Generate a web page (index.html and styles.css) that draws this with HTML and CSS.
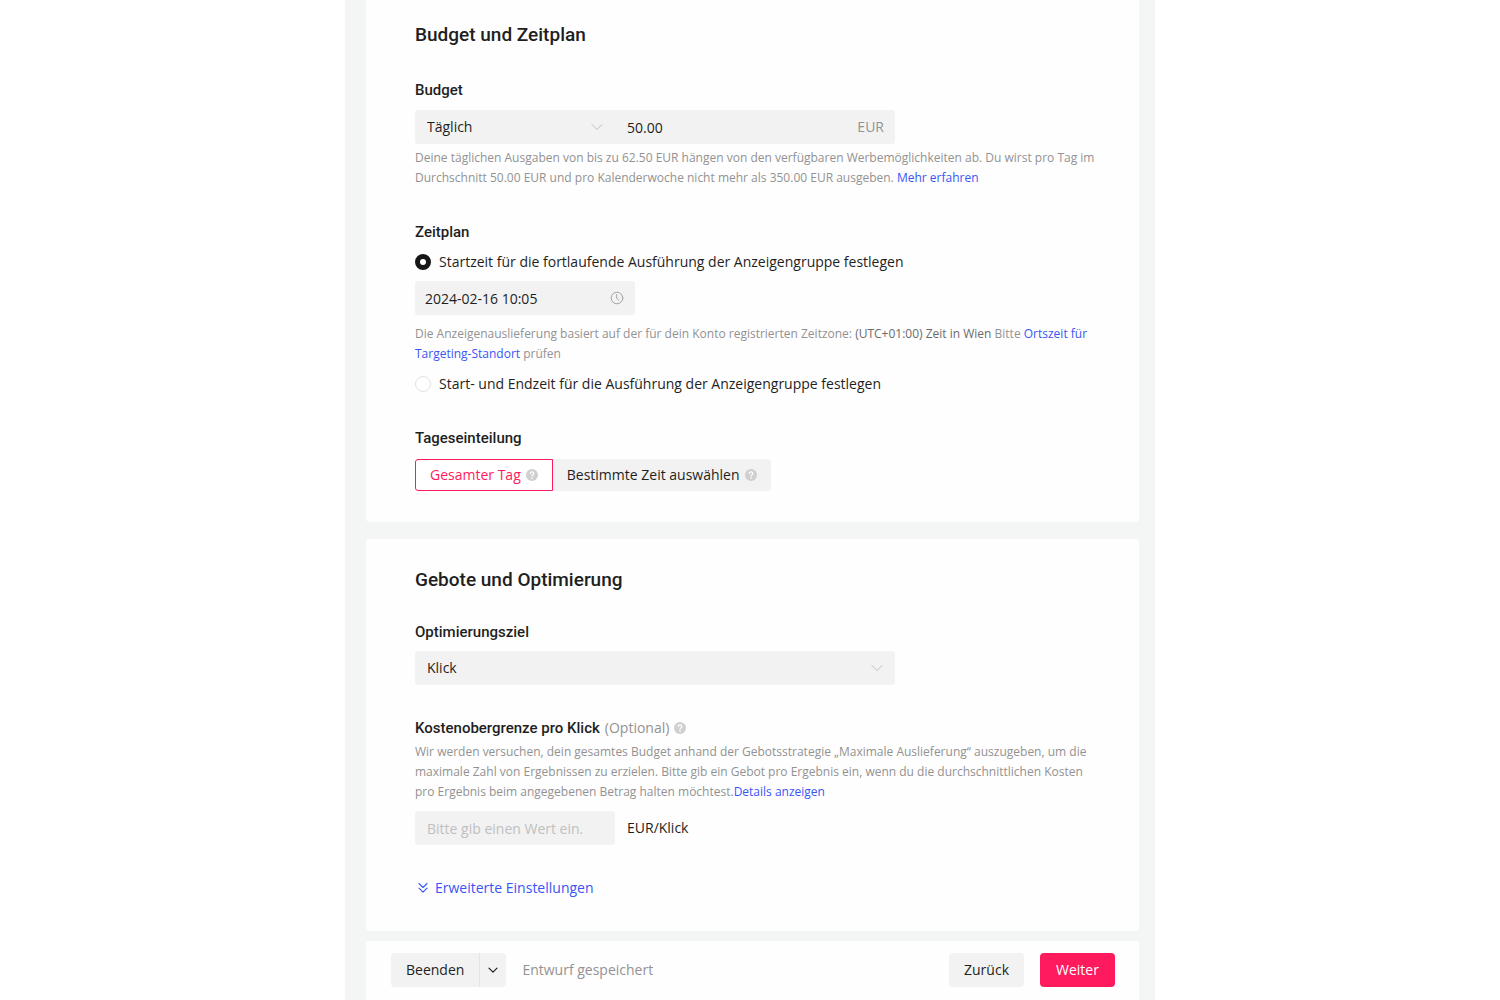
FILE: index.html
```
<!DOCTYPE html>
<html lang="de">
<head>
  <meta charset="UTF-8" />
  <meta name="viewport" content="width=device-width, initial-scale=1.0"/>
  <title>Anzeigengruppe – Budget und Gebote</title>
  <link rel="stylesheet" href="styles.css">
</head>
<body>
  <!-- Shared icons -->
  <svg class="sprite" aria-hidden="true">
    <symbol id="icon-help" viewBox="0 0 12 12">
      <circle cx="6" cy="6" r="6" fill="#cfcfcf"/>
      <path d="M4.3 4.6a1.7 1.7 0 1 1 2.6 1.4c-.6.4-.9.6-.9 1.1" fill="none" stroke="#fff" stroke-width="1.2" stroke-linecap="round"/>
      <circle cx="6" cy="9.1" r=".8" fill="#fff"/>
    </symbol>
    <symbol id="icon-chevron" viewBox="0 0 12 8">
      <path d="M1 1.5l5 5 5-5" fill="none" stroke="currentColor" stroke-linecap="round" stroke-linejoin="round"/>
    </symbol>
  </svg>

  <form class="page">
    <!-- Budget & schedule -->
    <section class="card card-budget">
      <h2>Budget und Zeitplan</h2>

      <div class="form-group">
        <label class="title" for="budgetType">Budget</label>
        <div class="field budget-row">
          <div class="select-wrap budget-type">
            <select id="budgetType">
              <option>Täglich</option>
              <option>Laufzeit</option>
            </select>
            <svg class="arrow"><use href="#icon-chevron"/></svg>
          </div>
          <input class="budget-amount" type="text" value="50.00" aria-label="Budgetbetrag">
          <span class="unit">EUR</span>
        </div>
        <p class="hint">Deine täglichen Ausgaben von bis zu 62.50 EUR hängen von den verfügbaren Werbemöglichkeiten ab. Du wirst pro Tag im Durchschnitt 50.00 EUR und pro Kalenderwoche nicht mehr als 350.00 EUR ausgeben. <a href="#">Mehr erfahren</a></p>
      </div>

      <div class="form-group">
        <h3 class="title">Zeitplan</h3>
        <label class="radio"><input type="radio" name="schedule" checked> Startzeit für die fortlaufende Ausführung der Anzeigengruppe festlegen</label>
        <div class="field date-field">
          <input type="text" value="2024-02-16 10:05" aria-label="Startzeit">
          <svg class="clock" viewBox="0 0 14 14" fill="none" stroke="#a6a6a6" stroke-linecap="round">
            <circle cx="7" cy="7" r="5.8"/>
            <path d="M6.6 3.6v3.6l2.2 1.9"/>
          </svg>
        </div>
        <p class="hint hint-zone">Die Anzeigenauslieferung basiert auf der für dein Konto registrierten Zeitzone: <span class="zone">(UTC+01:00) Zeit in Wien</span> Bitte <a href="#">Ortszeit für Targeting-Standort</a> prüfen</p>
        <label class="radio"><input type="radio" name="schedule"> Start- und Endzeit für die Ausführung der Anzeigengruppe festlegen</label>
      </div>

      <div class="form-group">
        <h3 class="title">Tageseinteilung</h3>
        <div class="segments">
          <button type="button" class="segment active">Gesamter Tag <svg class="help"><use href="#icon-help"/></svg></button>
          <button type="button" class="segment">Bestimmte Zeit auswählen <svg class="help"><use href="#icon-help"/></svg></button>
        </div>
      </div>
    </section>

    <!-- Bidding & optimization -->
    <section class="card card-bid">
      <h2>Gebote und Optimierung</h2>

      <div class="form-group">
        <label class="title" for="goal">Optimierungsziel</label>
        <div class="field select-wrap">
          <select id="goal">
            <option>Klick</option>
            <option>Conversion</option>
          </select>
          <svg class="arrow"><use href="#icon-chevron"/></svg>
        </div>
      </div>

      <div class="form-group">
        <div class="title-row">
          <label class="title" for="bid">Kostenobergrenze pro Klick</label>
          <span class="optional">(Optional)</span>
          <svg class="help"><use href="#icon-help"/></svg>
        </div>
        <p class="hint">Wir werden versuchen, dein gesamtes Budget anhand der Gebotsstrategie „Maximale Auslieferung“ auszugeben, um die maximale Zahl von Ergebnissen zu erzielen. Bitte gib ein Gebot pro Ergebnis ein, wenn du die durchschnittlichen Kosten pro Ergebnis beim angegebenen Betrag halten möchtest.<a href="#">Details anzeigen</a></p>
        <div class="bid-row">
          <div class="field bid-field">
            <input id="bid" type="text" placeholder="Bitte gib einen Wert ein.">
          </div>
          <span>EUR/Klick</span>
        </div>
      </div>

      <a class="advanced" href="#">
        <svg viewBox="0 0 12 12" fill="none" stroke="currentColor" stroke-width="1.1" stroke-linecap="round" stroke-linejoin="round">
          <path d="M2 1.5l4 4 4-4M2 6.2l4 4 4-4"/>
        </svg>
        Erweiterte Einstellungen
      </a>
    </section>

    <!-- Footer actions -->
    <footer class="footer">
      <div class="split">
        <button type="button" class="btn">Beenden</button>
        <button type="button" class="btn btn-more" aria-label="Weitere Optionen"><svg viewBox="0 0 10 7" fill="none" stroke="currentColor" stroke-width="1.2" stroke-linecap="round" stroke-linejoin="round"><path d="M1 1.2l4 4 4-4"/></svg></button>
      </div>
      <span class="saved">Entwurf gespeichert</span>
      <div class="nav">
        <button type="button" class="btn">Zurück</button>
        <button type="submit" class="btn btn-primary">Weiter</button>
      </div>
    </footer>
  </form>
</body>
</html>
```
FILE: styles.css
```
:root {
  --primary-color: #fe1a5c;
  --link-color: #3955f6;
  --text-color: #1f1f1f;
  --muted-color: #929292;
  --field-color: #f2f2f2;
  --bg-color: #f4f5f5;
}

* {
  box-sizing: border-box;
}

body {
  margin: 0;
  background: #fff;
  color: var(--text-color);
  font-family: "Open Sans", "Liberation Sans", sans-serif;
  font-size: 14px;
  line-height: 20px;
}

h2, h3, p {
  margin: 0;
}

a {
  color: var(--link-color);
  text-decoration: none;
}

input, select, button {
  font: inherit;
  color: inherit;
  margin: 0;
  padding: 0;
  border: none;
  border-radius: 0;
  background: transparent;
}

button {
  cursor: pointer;
}

svg {
  flex: none;
}

.sprite {
  display: none;
}

.page {
  max-width: 810px;
  min-height: 100vh;
  margin: 0 auto;
  padding: 0 16px 0 21px;
  background: var(--bg-color);
}

.card {
  padding: 28px 43px 32px 49px;
  background: #fefefe;
  border-radius: 4px;
}

.card-budget {
  margin-bottom: 17px;
  padding-top: 22px;
  padding-bottom: 31px;
  border-radius: 0 0 4px 4px;
}

.card-bid {
  margin-bottom: 10px;
}

h2 {
  font-family: Roboto, sans-serif;
  font-size: 19px;
  font-weight: 500;
  line-height: 26px;
  margin-bottom: 29px;
}

.card-budget h2 {
  margin-bottom: 32px;
}

.form-group {
  margin-bottom: 33px;
}

.card-budget .form-group {
  margin-bottom: 34px;
}

.card-budget .form-group:last-child {
  margin-bottom: 0;
}

.title {
  display: block;
  font-family: Roboto, sans-serif;
  font-size: 15px;
  font-weight: 500;
  line-height: 20px;
}

.field {
  display: flex;
  align-items: center;
  max-width: 480px;
  height: 34px;
  margin-top: 9px;
  background: var(--field-color);
  border-radius: 3px;
}

.budget-row {
  margin-top: 10px;
}

.field input {
  flex: 1;
  min-width: 0;
  height: 100%;
  padding: 0 12px;
}

.field input::placeholder {
  color: #c0c0c0;
}

.select-wrap {
  position: relative;
}

.select-wrap select {
  width: 100%;
  height: 100%;
  padding: 0 32px 0 12px;
  appearance: none;
}

.arrow {
  position: absolute;
  right: 12px;
  width: 12px;
  height: 8px;
  color: #bdbdbd;
  pointer-events: none;
}

.budget-type {
  display: flex;
  align-items: center;
  width: 200px;
  height: 100%;
}

.unit {
  padding-right: 11px;
  color: var(--muted-color);
}

.hint {
  margin-top: 4px;
  color: var(--muted-color);
  font-size: 12px;
  line-height: 20px;
}

.hint-zone {
  margin: 9px 0 10px;
}

.zone {
  color: #6b6b6b;
}

/* Radios */
.radio {
  display: flex;
  align-items: center;
  gap: 8px;
  margin-top: 10px;
}

.radio input {
  flex: none;
  width: 16px;
  height: 16px;
  appearance: none;
  background: #fff;
  border: 1px solid #e2e2e2;
  border-radius: 50%;
}

.radio input:checked {
  border: 5px solid #161616;
}

.date-field {
  max-width: 220px;
}

.field.date-field input {
  padding-left: 10px;
}

.clock {
  width: 14px;
  height: 14px;
  margin-right: 11px;
}

/* Day parting */
.segments {
  display: flex;
  margin-top: 11px;
}

.segment {
  display: flex;
  align-items: center;
  gap: 5px;
  height: 32px;
  padding: 0 14px;
  background: var(--field-color);
  border-radius: 0 3px 3px 0;
}

.segment.active {
  color: var(--primary-color);
  background: #fff;
  border: 1px solid var(--primary-color);
  border-radius: 3px 0 0 3px;
}

.help {
  width: 12px;
  height: 12px;
}

/* Bid */
.title-row {
  display: flex;
  align-items: center;
  gap: 5px;
}

.optional,
.saved {
  color: var(--muted-color);
}

.bid-row {
  display: flex;
  align-items: center;
  gap: 12px;
  margin-top: 9px;
}

.bid-field {
  width: 200px;
  margin-top: 0;
}

.advanced {
  display: inline-flex;
  align-items: center;
  gap: 6px;
  padding-left: 2px;
}

.advanced svg {
  width: 12px;
  height: 12px;
}

/* Footer */
.footer {
  display: flex;
  align-items: center;
  padding: 12px 24px 13px 25px;
  background: #fefefe;
}

.split {
  display: flex;
  margin-right: 16px;
}

.btn {
  height: 34px;
  padding: 0 15px;
  background: var(--field-color);
  border-radius: 4px;
}

.split .btn:first-child {
  border-radius: 4px 0 0 4px;
}

.btn-more {
  display: flex;
  align-items: center;
  padding: 0 8px;
  border-left: 1px solid #e4e4e4;
}

.split .btn-more {
  border-radius: 0 4px 4px 0;
}

.btn-more svg {
  width: 10px;
  height: 7px;
}

.nav {
  display: flex;
  gap: 16px;
  margin-left: auto;
}

.nav .btn {
  min-width: 75px;
}

.btn-primary {
  color: #fff;
  background: var(--primary-color);
}
```
